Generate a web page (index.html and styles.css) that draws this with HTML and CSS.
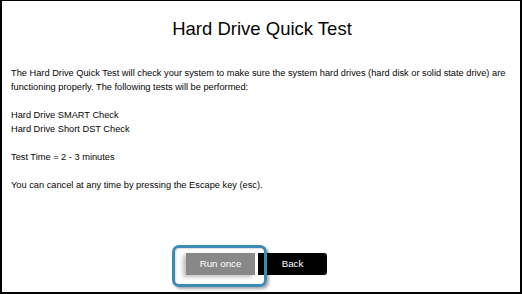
FILE: index.html
```html
<!DOCTYPE html>
<html>
<head>
<meta charset="utf-8">
<link rel="stylesheet" href="styles.css">
</head>
<body>
<div class="frame">
  <h1 class="title">Hard Drive Quick Test</h1>
  <div class="content">
    <p class="para">The Hard Drive Quick Test will check your system to make sure the system hard drives (hard disk or solid state drive) are<br>functioning properly. The following tests will be performed:</p>
    <p class="para">Hard Drive SMART Check<br>Hard Drive Short DST Check</p>
    <p class="para">Test Time = 2 - 3 minutes</p>
    <p class="para">You can cancel at any time by pressing the Escape key (esc).</p>
  </div>
  <div class="actions">
    <div class="btn btn-run">Run once</div>
    <div class="btn btn-back">Back</div>
  </div>
</div>
</body>
</html>
```
FILE: styles.css
```css
html, body {
  margin: 0;
  padding: 0;
  background: #ffffff;
}
.frame {
  box-sizing: border-box;
  width: 522px;
  height: 294px;
  border-style: solid;
  border-color: #000;
  border-width: 1px 2px 2px 2px;
  background: #fff;
  font-family: "Liberation Sans", Arial, sans-serif;
  color: #050505;
  display: flex;
  flex-direction: column;
}
.title {
  margin: 17px 0 0 0;
  font-size: 18.5px;
  line-height: 22px;
  font-weight: normal;
  text-align: center;
  color: #050505;
  padding-left: 2px;
}
.content {
  margin-top: 26px;
  padding-left: 9px;
}
.para {
  margin: 0 0 14px 0;
  font-size: 9.25px;
  line-height: 14px;
  white-space: nowrap;
}
.actions {
  margin-top: 47px;
  display: flex;
  justify-content: center;
  gap: 3px;
  padding-right: 9px;
}
.btn {
  box-sizing: border-box;
  width: 69px;
  height: 22px;
  font-size: 9.75px;
  line-height: 22px;
  text-align: center;
  color: #fff;
}
.btn-run {
  position: relative;
  background: #888888;
  box-shadow: -3px 2px 4px rgba(0,0,0,0.25);
}
.btn-run::after {
  content: "";
  position: absolute;
  left: -14px;
  top: -8px;
  right: -12px;
  bottom: -12px;
  border: 3px solid #3a8cb5;
  border-radius: 7px;
  box-shadow: 2px 2px 3px rgba(0,0,0,0.35), inset 1px 1px 2px rgba(0,0,0,0.15);
}
.btn-back {
  background: #000;
  border-radius: 0 3px 3px 0;
}
```
